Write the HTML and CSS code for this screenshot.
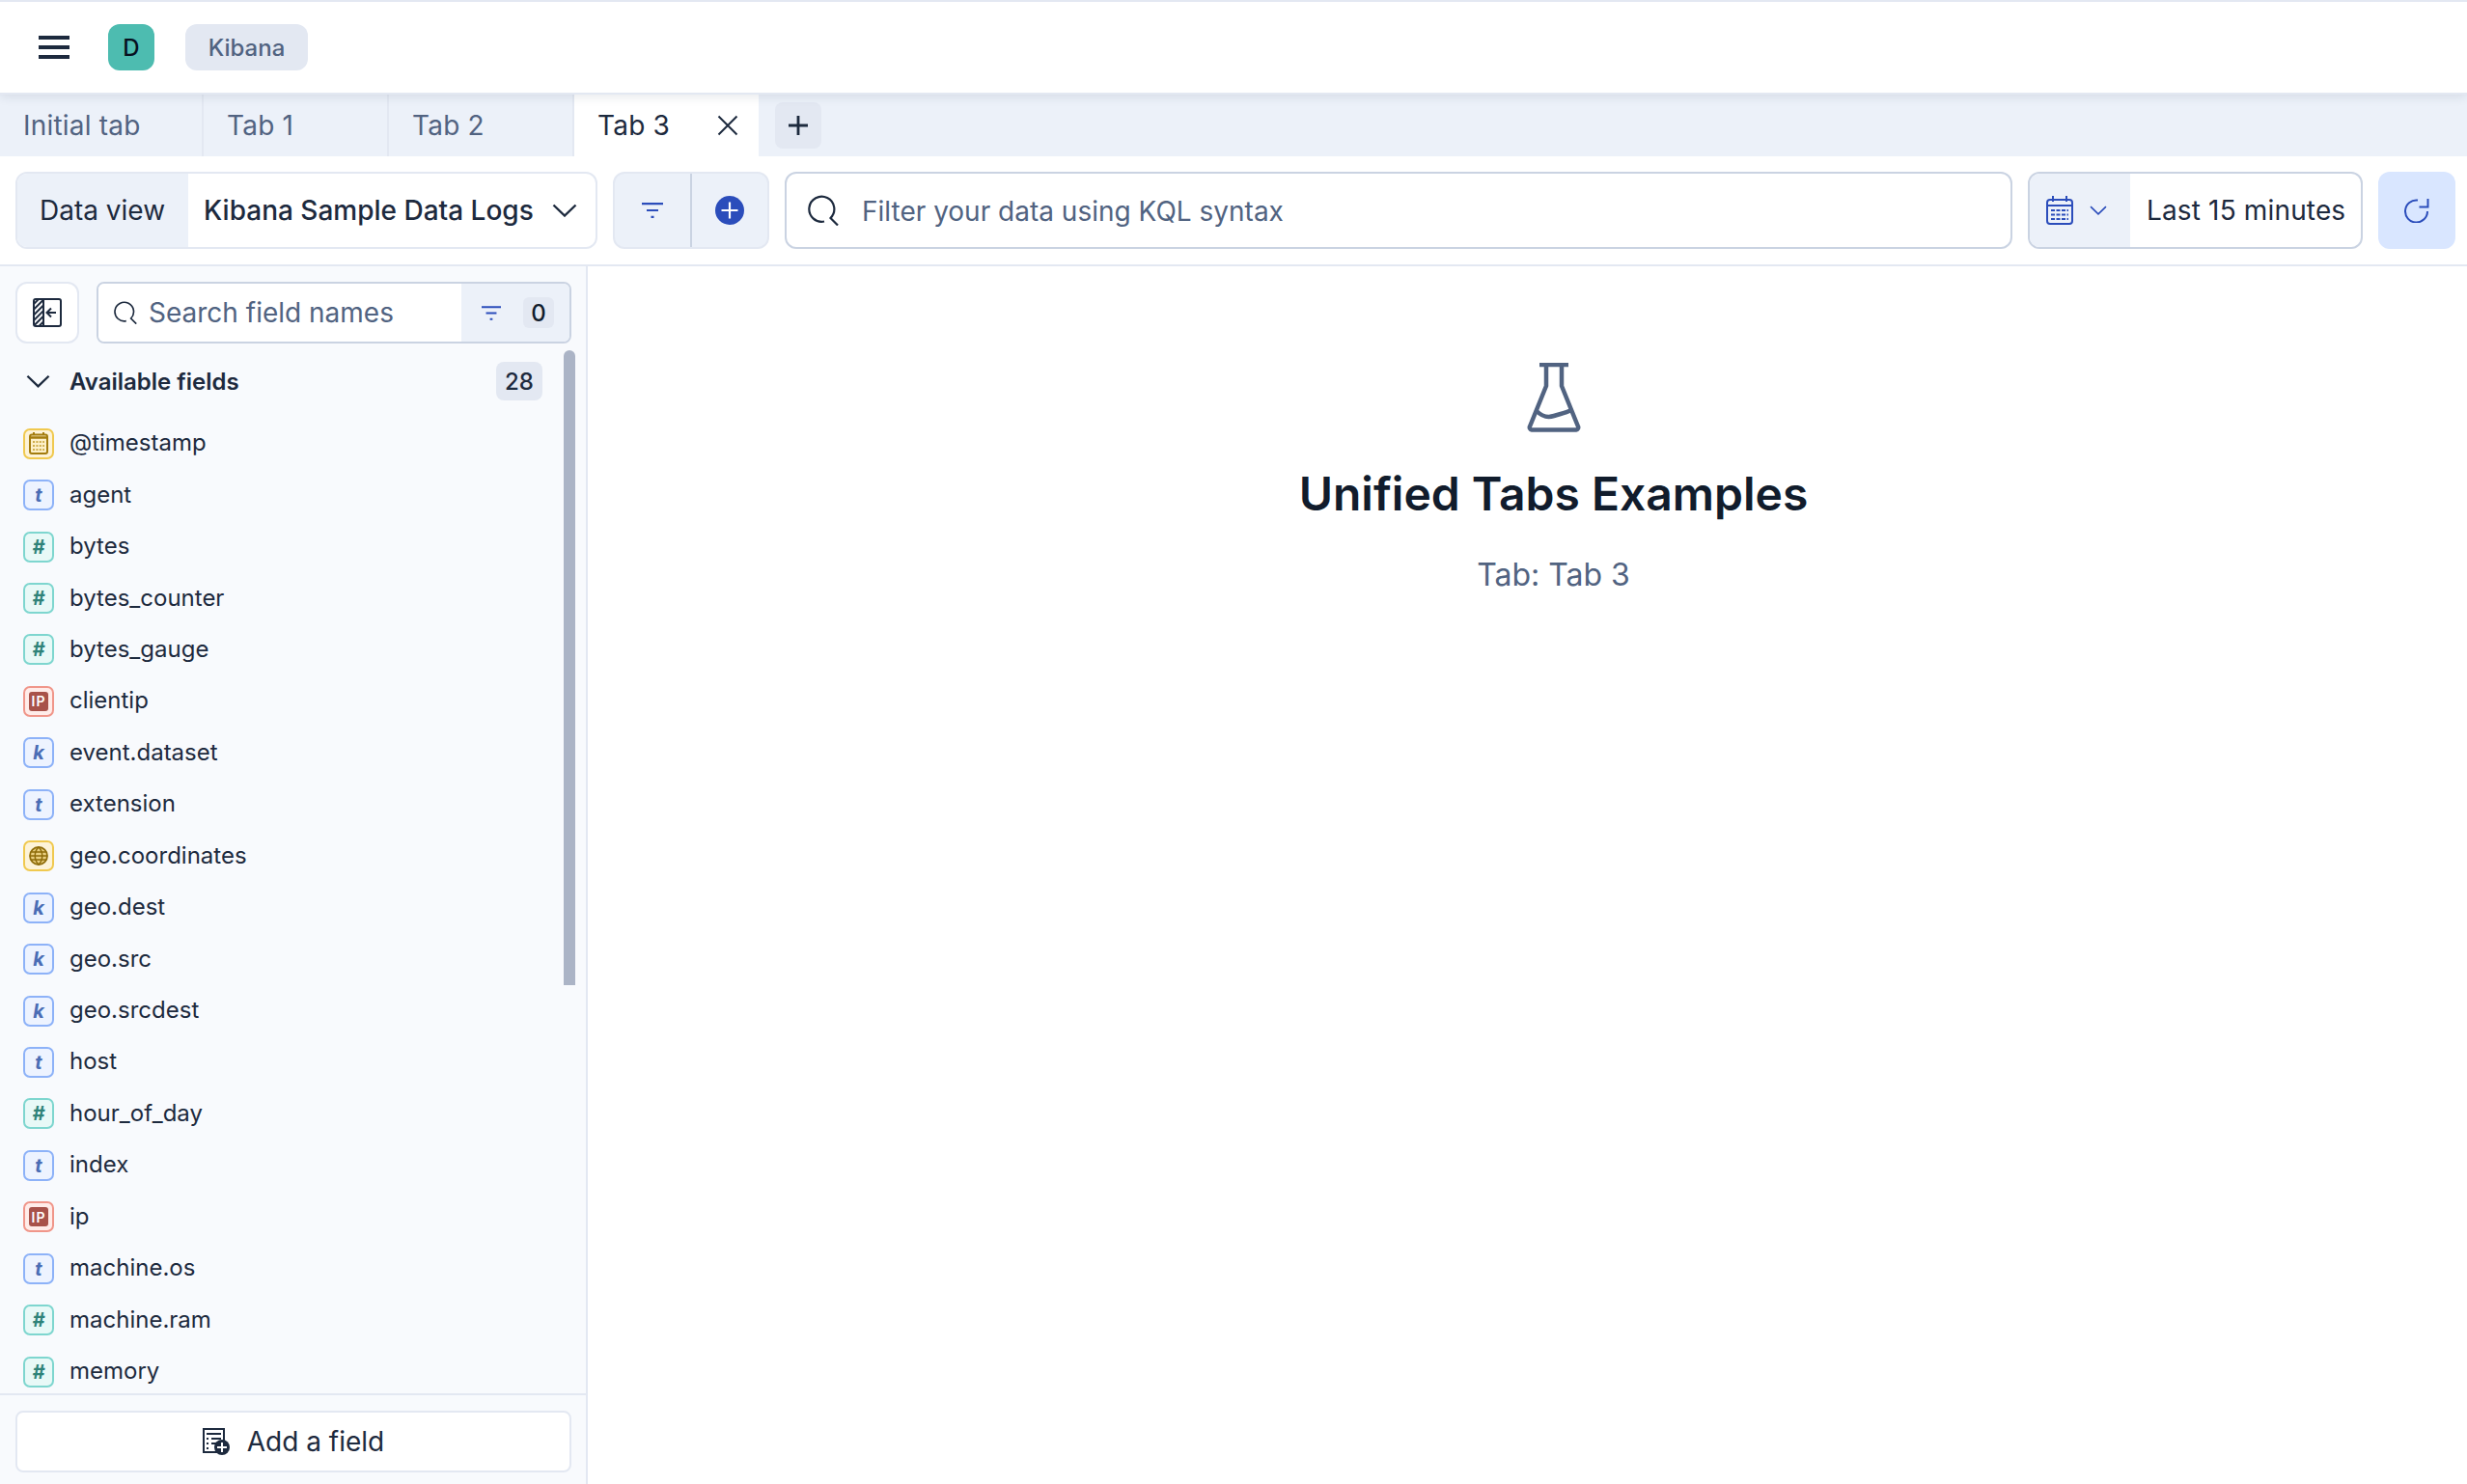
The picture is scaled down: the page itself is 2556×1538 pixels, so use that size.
FILE: index.html
```html
<!DOCTYPE html>
<html lang="en">
<head>
  <meta charset="UTF-8">
  <title>Unified Tabs Examples - Kibana</title>
  <link rel="stylesheet" href="styles.css">
</head>
<body>

<svg class="sprite" xmlns="http://www.w3.org/2000/svg">
  <symbol id="i-chevron" viewBox="0 0 26 14"><path d="M1.5 1.5 13 12.5 24.500 1.500" fill="none" stroke="currentColor" stroke-width="2.400"/></symbol>
  <symbol id="i-filter" viewBox="0 0 22 16"><path d="M0 1.200h22M5 8h12M9.500 14.800h3" fill="none" stroke="currentColor" stroke-width="2.200"/></symbol>
  <symbol id="i-search" viewBox="0 0 32 32"><path d="M17 27.500A13 13 0 1 1 23.500 24L31 31.500" fill="none" stroke="currentColor" stroke-width="2.200"/></symbol>
  <symbol id="i-field-calendar" viewBox="0 0 32 32"><rect x="7" y="6.500" width="18" height="19.500" rx="2" fill="#fdf0c9" stroke="#a37c0e" stroke-width="2"/><path d="M7 9.500h18" stroke="#a37c0e" stroke-width="2.500"/><path d="M11 4v3M21 4v3" stroke="#a37c0e" stroke-width="2"/><path d="M10 14h12M10 18h12M10 22h12" stroke="#cfae4e" stroke-width="2" stroke-dasharray="2 1.400"/></symbol>
</svg>

<header class="top-bar">
  <button class="menu-btn"><span></span><span></span><span></span></button>
  <div class="avatar">D</div>
  <div class="crumb">Kibana</div>
</header>

<nav class="tabs">
  <div class="tab tab-first">Initial tab</div>
  <div class="tab">Tab 1</div>
  <div class="tab">Tab 2</div>
  <div class="tab tab-active">
    Tab 3
    <svg class="tab-close" viewBox="0 0 22 22"><path d="M1.500 1.500l19 19M20.500 1.500l-19 19" fill="none" stroke="currentColor" stroke-width="2"/></svg>
  </div>
  <div class="tab-add-wrap">
    <button class="tab-add">
      <svg width="20" height="20" viewBox="0 0 20 20"><path d="M10 0v20M0 10h20" fill="none" stroke="#1d2a3e" stroke-width="2.800"/></svg>
    </button>
  </div>
</nav>

<section class="toolbar">
  <div class="group data-view">
    <div class="data-view-label">Data view</div>
    <div class="data-view-value">
      Kibana Sample Data Logs
      <svg class="chevron-lg" width="26" height="14"><use href="#i-chevron"/></svg>
    </div>
  </div>

  <div class="group filter-group">
    <div class="filter-cell filter-cell-left"><svg width="22" height="16" class="blue"><use href="#i-filter"/></svg></div>
    <div class="filter-cell">
      <svg width="30" height="30" viewBox="0 0 30 30"><circle cx="15" cy="15" r="15" fill="#2b4dbb"/><path d="M15 6.500v17M6.500 15h17" stroke="#fff" stroke-width="2.200"/></svg>
    </div>
  </div>

  <div class="group query">
    <svg class="query-icon" width="32" height="32"><use href="#i-search"/></svg>
    <span class="query-text">Filter your data using KQL syntax</span>
  </div>

  <div class="group date">
    <div class="date-left">
      <svg width="28" height="30" viewBox="0 0 28 30" class="blue">
        <rect x="1" y="4" width="26" height="25" rx="3" fill="none" stroke="currentColor" stroke-width="2"/>
        <path d="M1 10h26" stroke="currentColor" stroke-width="2"/>
        <path d="M7 0v6M21 0v6" stroke="currentColor" stroke-width="2"/>
        <path d="M5 15h18M5 19.500h18M5 24h18" stroke="currentColor" stroke-width="2" stroke-dasharray="4 1.500"/>
      </svg>
      <svg width="18" height="10" class="blue"><use href="#i-chevron"/></svg>
    </div>
    <div class="date-value">Last 15 minutes</div>
  </div>

  <button class="refresh">
    <svg width="26" height="26" viewBox="0 0 26 26"><path d="M24 14A11.500 11.500 0 1 1 14 2.600M24.500 1v8.500h-9" fill="none" stroke="#2b4dbb" stroke-width="2"/></svg>
  </button>
</section>

<div class="layout">
  <aside class="sidebar">
    <div class="side-top">
      <button class="collapse-btn">
        <svg width="30" height="30" viewBox="0 0 30 30">
          <defs>
            <pattern id="hatch" width="4" height="4" patternUnits="userSpaceOnUse" patternTransform="rotate(-45)"><rect width="4" height="2" fill="#1d2a3e"/></pattern>
          </defs>
          <rect x="1" y="1" width="10" height="28" fill="url(#hatch)"/>
          <rect x="1" y="1" width="28" height="28" rx="2" fill="none" stroke="#1d2a3e" stroke-width="2"/>
          <path d="M11 1v28M24 15H15M19 10.500 14.500 15l4.500 4.500" fill="none" stroke="#1d2a3e" stroke-width="2"/>
        </svg>
      </button>
      <div class="field-search">
        <div class="field-search-input">
          <svg width="24" height="24" class="icon-dark"><use href="#i-search"/></svg>
          <span>Search field names</span>
        </div>
        <div class="field-search-filter">
          <svg width="20" height="15" class="blue"><use href="#i-filter"/></svg>
          <span class="zero">0</span>
        </div>
      </div>
    </div>

    <div class="side-body">
      <div class="field-panel">
        <div class="panel-head">
          <svg width="25" height="14" class="icon-dark"><use href="#i-chevron"/></svg>
          <span class="panel-title">Available fields</span>
          <span class="count">28</span>
        </div>
        <ul class="fields">
          <li><span class="token token-date"><svg width="32" height="32"><use href="#i-field-calendar"/></svg></span>@timestamp</li>
          <li><span class="token token-text">t</span>agent</li>
          <li><span class="token token-num">#</span>bytes</li>
          <li><span class="token token-num">#</span>bytes_counter</li>
          <li><span class="token token-num">#</span>bytes_gauge</li>
          <li><span class="token token-ip"><span class="ip-box">IP</span></span>clientip</li>
          <li><span class="token token-text">k</span>event.dataset</li>
          <li><span class="token token-text">t</span>extension</li>
          <li>
            <span class="token token-date">
              <svg width="20" height="20" viewBox="0 0 20 20"><circle cx="10" cy="10" r="9" fill="#e9cf7f" stroke="#8e6c0a" stroke-width="1.800"/><path d="M1 10h18M2.500 6h15M2.500 14h15M10 1c-5 5-5 13 0 18M10 1c5 5 5 13 0 18" fill="none" stroke="#8e6c0a" stroke-width="1.500"/></svg>
            </span>geo.coordinates
          </li>
          <li><span class="token token-text">k</span>geo.dest</li>
          <li><span class="token token-text">k</span>geo.src</li>
          <li><span class="token token-text">k</span>geo.srcdest</li>
          <li><span class="token token-text">t</span>host</li>
          <li><span class="token token-num">#</span>hour_of_day</li>
          <li><span class="token token-text">t</span>index</li>
          <li><span class="token token-ip"><span class="ip-box">IP</span></span>ip</li>
          <li><span class="token token-text">t</span>machine.os</li>
          <li><span class="token token-num">#</span>machine.ram</li>
          <li><span class="token token-num">#</span>memory</li>
        </ul>
      </div>
      <div class="scroll-thumb"></div>
    </div>

    <div class="side-foot">
      <button class="add-field">
        <svg width="28" height="28" viewBox="0 0 28 28">
          <rect x="1" y="1" width="21" height="24" fill="#fff" stroke="#1d2a3e" stroke-width="2"/>
          <path d="M4 6h15M4 11h2M9 11h10M4 16h2M9 16h5M4 21h2" stroke="#1d2a3e" stroke-width="2"/>
          <circle cx="20" cy="20" r="8" fill="#1d2a3e"/>
          <path d="M20 15v10M15 20h10" stroke="#fff" stroke-width="2"/>
        </svg>
        Add a field
      </button>
    </div>
  </aside>

  <main class="main">
    <svg class="flask" width="56" height="72" viewBox="0 0 56 72">
      <path d="M13 2h30M20 2v22L3 66a2.500 2.500 0 0 0 2 3.500h46a2.500 2.500 0 0 0 2-3.500L36 24V2" fill="none" stroke="#516381" stroke-width="4.500" stroke-linejoin="round"/>
      <path d="M10 50c6 6 12 7 18 5s12-3 18-6" fill="none" stroke="#516381" stroke-width="4.500"/>
    </svg>
    <h1>Unified Tabs Examples</h1>
    <p>Tab: Tab 3</p>
  </main>
</div>

</body>
</html>
```

FILE: styles.css
```css
* {
  box-sizing: border-box;
}

html, body {
  height: 100%;
}

body {
  margin: 0;
  height: 1538px;
  overflow: hidden;
  display: flex;
  flex-direction: column;
  background-color: #fff;
  color: #1d2a3e;
  font-family: Inter, 'Noto Sans', sans-serif;
  font-size: 28px;
}

button {
  font: inherit;
  color: inherit;
  padding: 0;
  border: none;
  cursor: pointer;
}

.sprite {
  display: none;
}

.blue {
  color: #2b4dbb;
}

.icon-dark {
  color: #1d2a3e;
  flex: none;
}

/* top bar */
.top-bar {
  position: relative;
  z-index: 2;
  height: 98px;
  flex: none;
  display: flex;
  align-items: center;
  padding: 0 0 0 40px;
  background-color: #fff;
  border-top: 2px solid #e3e8f2;
  border-bottom: 2px solid #e3e8f2;
  box-shadow: 0 2px 10px rgba(43, 57, 79, 0.12);
}

.menu-btn {
  width: 32px;
  height: 24px;
  margin-right: 40px;
  display: flex;
  flex-direction: column;
  justify-content: space-between;
  background: none;
}

.menu-btn span {
  display: block;
  height: 4px;
  background-color: #1d2a3e;
}

.avatar {
  width: 48px;
  height: 48px;
  margin-right: 32px;
  display: flex;
  align-items: center;
  justify-content: center;
  border-radius: 12px;
  background-color: #4dbcb0;
  color: #07101f;
  font-size: 24px;
  font-weight: 500;
}

.crumb {
  width: 127px;
  height: 48px;
  display: flex;
  align-items: center;
  justify-content: center;
  border-radius: 12px;
  background-color: #e3e8f2;
  color: #516381;
  font-size: 24px;
  font-weight: 500;
}

/* tabs */
.tabs {
  height: 64px;
  flex: none;
  display: flex;
  background-color: #ecf1f9;
  letter-spacing: 0.2px;
}

.tab {
  width: 192px;
  display: flex;
  align-items: center;
  padding-left: 24px;
  color: #516381;
  border-right: 2px solid #e3e8f2;
}

.tab-first {
  width: 211px;
}

.tab-active {
  width: 191px;
  justify-content: space-between;
  padding-right: 21px;
  background-color: #fff;
  color: #1d2a3e;
  border-right: none;
}

.tab-close {
  width: 22px;
  height: 22px;
}

.tab-add-wrap {
  display: flex;
  align-items: center;
  padding-left: 17px;
}

.tab-add {
  width: 48px;
  height: 48px;
  display: flex;
  align-items: center;
  justify-content: center;
  border-radius: 8px;
  background-color: #e3e8f2;
}

/* toolbar */
.toolbar {
  height: 114px;
  flex: none;
  display: flex;
  gap: 16px;
  padding: 16px 12px 16px 16px;
  border-bottom: 2px solid #e3e8f2;
  background-color: #fff;
}

.group {
  height: 80px;
  display: flex;
  align-items: stretch;
  border: 2px solid #e3e8f2;
  border-radius: 12px;
  overflow: hidden;
}

.data-view {
  width: 603px;
  flex: none;
}

.data-view-label {
  width: 177px;
  display: flex;
  align-items: center;
  padding-left: 23px;
  background-color: #ecf1f9;
}

.data-view-value {
  flex: 1;
  display: flex;
  align-items: center;
  justify-content: space-between;
  padding: 0 19px 0 16px;
  font-weight: 500;
}

.filter-group {
  width: 162px;
  flex: none;
  background-color: #ecf1f9;
}

.filter-cell {
  flex: 1;
  display: flex;
  align-items: center;
  justify-content: center;
}

.filter-cell-left {
  flex: none;
  width: 80px;
  border-right: 2px solid #cad3e2;
}

.query {
  flex: 1;
  align-items: center;
  padding-left: 22px;
  border-color: #cad3e2;
}

.query-icon {
  color: #1d2a3e;
}

.query-text {
  margin-left: 24px;
  padding-top: 1px;
  color: #516381;
}

.date {
  width: 347px;
  flex: none;
  border-color: #cad3e2;
}

.date-left {
  width: 104px;
  display: flex;
  align-items: center;
  gap: 17px;
  padding-left: 17px;
  background-color: #ecf1f9;
}

.date-value {
  flex: 1;
  display: flex;
  align-items: center;
  padding-left: 17px;
  letter-spacing: 0.15px;
}

.refresh {
  width: 80px;
  height: 80px;
  flex: none;
  display: flex;
  align-items: center;
  justify-content: center;
  border-radius: 12px;
  background-color: #d9e6ff;
}

/* sidebar */
.layout {
  flex: 1;
  min-height: 0;
  display: flex;
}

.sidebar {
  width: 609px;
  flex: none;
  display: flex;
  flex-direction: column;
  background-color: #f8fafd;
  border-right: 2px solid #e3e8f2;
}

.side-top {
  flex: none;
  display: flex;
  gap: 18px;
  padding: 16px 15px 0 16px;
}

.collapse-btn {
  width: 66px;
  height: 64px;
  flex: none;
  display: flex;
  align-items: center;
  justify-content: center;
  background-color: #fff;
  border: 2px solid #e3e8f2;
  border-radius: 12px;
}

.field-search {
  flex: 1;
  height: 64px;
  display: flex;
  border: 2px solid #cad3e2;
  border-radius: 8px;
  overflow: hidden;
}

.field-search-input {
  flex: 1;
  display: flex;
  align-items: center;
  gap: 12px;
  padding-left: 16px;
  background-color: #fff;
  color: #516381;
}

.field-search-filter {
  width: 112px;
  flex: none;
  display: flex;
  align-items: center;
  justify-content: space-between;
  padding: 0 16px 0 21px;
  background-color: #ecf1f9;
}

.zero {
  width: 32px;
  height: 32px;
  display: flex;
  align-items: center;
  justify-content: center;
  border-radius: 6px;
  background-color: #e3e8f2;
  color: #111c2c;
  font-size: 24px;
  font-weight: 500;
}

.side-body {
  flex: 1;
  min-height: 0;
  display: flex;
  border-bottom: 2px solid #e3e8f2;
}

.field-panel {
  flex: 1;
  min-width: 0;
  overflow: hidden;
  padding-left: 24px;
}

.panel-head {
  height: 59px;
  padding: 19px 22px 0 3px;
  display: flex;
  align-items: center;
}

.panel-title {
  margin-left: 20px;
  font-size: 24px;
  font-weight: 600;
}

.count {
  margin-left: auto;
  width: 48px;
  height: 40px;
  display: flex;
  align-items: center;
  justify-content: center;
  border-radius: 8px;
  background-color: #e3e8f2;
  font-size: 24px;
  font-weight: 500;
}

.fields {
  list-style: none;
  margin: 17px 0 0;
  padding: 0;
}

.fields li {
  height: 53.44px;
  display: flex;
  align-items: center;
  gap: 16px;
  font-size: 24px;
}

.token {
  width: 32px;
  height: 32px;
  flex: none;
  margin-top: 2px;
  display: flex;
  align-items: center;
  justify-content: center;
  border: 2px solid;
  border-radius: 7px;
  font-size: 20px;
  font-weight: 700;
  font-style: italic;
}

.token-date {
  border-color: #f0c94f;
  background-color: #fdf3d8;
}

.token-date svg {
  flex: none;
}

.token-text {
  border-color: #8db2f8;
  background-color: #edf3ff;
  color: #4a6db5;
}

.token-num {
  border-color: #7ed6cf;
  background-color: #e8f9f7;
  color: #2f8379;
}

.token-ip {
  border-color: #f0968a;
  background-color: #ffece9;
}

.ip-box {
  width: 20px;
  height: 20px;
  display: flex;
  align-items: center;
  justify-content: center;
  border-radius: 3px;
  background-color: #a8524a;
  color: #fff;
  font-size: 14px;
  font-weight: 600;
  font-style: normal;
  letter-spacing: 1px;
}

.scroll-thumb {
  width: 12px;
  height: 658px;
  flex: none;
  margin: 7px 11px 0 0;
  border-radius: 6px 6px 0 0;
  background-color: #abb4c6;
}

.side-foot {
  flex: none;
  height: 92px;
  padding: 16px 15px 0 16px;
}

.add-field {
  width: 100%;
  height: 64px;
  display: flex;
  align-items: center;
  justify-content: center;
  gap: 18px;
  background-color: #fff;
  border: 2px solid #e3e8f2;
  border-radius: 8px;
  font-weight: 400;
}

/* main */
.main {
  flex: 1;
  display: flex;
  flex-direction: column;
  align-items: center;
  padding: 100px 0 0 54px;
}

.flask {
  flex: none;
}

.main h1 {
  margin: 34px 0 0;
  color: #111c2c;
  font-size: 48px;
  line-height: 60px;
  font-weight: 600;
}

.main p {
  margin: 34px 0 0;
  color: #516381;
  font-size: 32px;
  line-height: 40px;
}
```
